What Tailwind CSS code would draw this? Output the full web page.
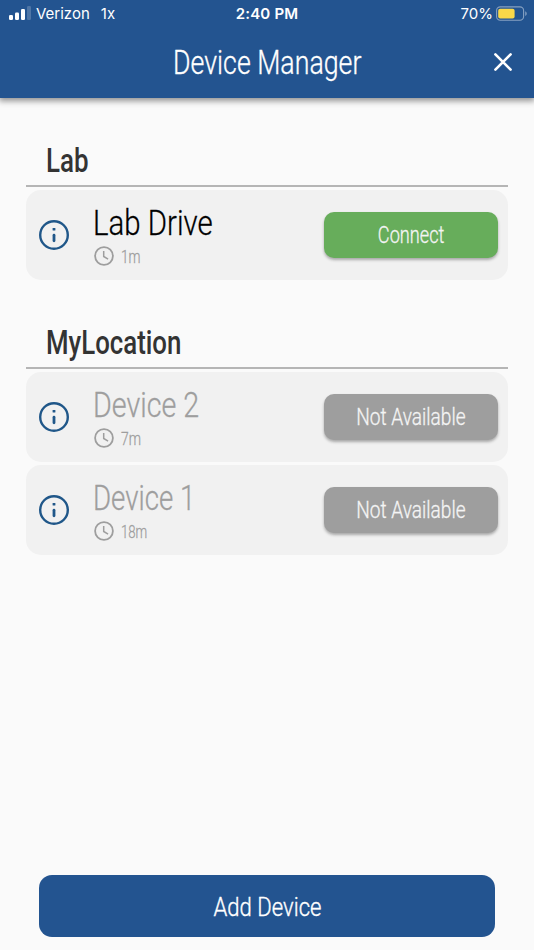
<!DOCTYPE html>
<html lang="en">
<head>
<meta charset="utf-8">
<title>Device Manager</title>
<script src="https://cdn.jsdelivr.net/npm/@tailwindcss/browser@4"></script>
</head>
<body class="bg-[#fafafa]">
<svg class="hidden">
  <symbol id="info" viewBox="0 0 30 30"><circle cx="15" cy="15" r="13.8" fill="none" stroke="#205789" stroke-width="2.4"/><rect x="13.6" y="7.9" width="2.8" height="2.6" rx=".6" fill="#205789"/><path d="M15 15.2v5.6" stroke="#205789" stroke-width="2.8" stroke-linecap="round"/></symbol>
  <symbol id="clock" viewBox="0 0 20 20"><circle cx="10" cy="10" r="8.9" fill="none" stroke="#9e9e9e" stroke-width="1.8"/><path d="M9.7 5v5.5l4.4 2.6" fill="none" stroke="#9e9e9e" stroke-width="1.5"/></symbol>
</svg>
<div class="flex h-[950px] w-[534px] flex-col overflow-hidden bg-[#fafafa] font-['Roboto',sans-serif] whitespace-nowrap">
  <header class="h-[98px] shrink-0 bg-[#235490] text-white shadow-[0_2px_6px_1px_rgba(0,0,0,0.42)]">
    <div class="grid h-7 grid-cols-3 items-center pr-[7px] pl-[9px] font-['Inter',sans-serif] text-[15px]">
      <div class="flex items-center">
        <svg class="-mt-px h-[15px] w-[22px]" viewBox="0 0 22 15" fill="#fff"><rect y="9" width="4" height="5" rx="1.2"/><rect x="6" y="6.5" width="4" height="7.5" rx="1.2"/><rect x="12" y="3" width="4" height="11" rx="1.2"/><rect x="18" y="0" width="4" height="14" rx="1.2" opacity=".2"/></svg>
        <span class="ml-[5px]">Verizon</span><span class="ml-[11px]">1x</span>
      </div>
      <div class="pr-[2px] text-center text-[15px] font-semibold tracking-[0.2px]">2:40 PM</div>
      <div class="flex items-center justify-end">
        <span>70%</span>
        <svg class="-mt-px ml-[3px] h-[15px] w-[31px]" viewBox="0 0 31 15"><rect x=".6" y=".9" width="27" height="13.4" rx="3.7" fill="none" stroke="#fff" stroke-opacity=".45" stroke-width="1.1"/><rect x="2.2" y="2.7" width="16.4" height="9.8" rx="2" fill="#f9d849"/><path d="M29.3 5.2c1.8.8 1.8 4 0 4.8z" fill="#fff" opacity=".5"/></svg>
      </div>
    </div>
    <div class="grid h-[70px] grid-cols-[60px_1fr_60px] items-center">
      <span></span>
      <h1 class="text-center text-[33px] leading-[70px] font-light [-webkit-text-stroke:0.35px]"><span class="inline-block scale-x-[.81]">Device Manager</span></h1>
      <svg class="-mt-[3px] ml-[20px] size-[18px]" viewBox="0 0 18 18"><path d="M1.4 1.4l15.2 15.2M16.6 1.4L1.4 16.6" stroke="#fff" stroke-width="2.6" stroke-linecap="round"/></svg>
    </div>
  </header>

  <main class="flex-1 px-[26px] pt-[38px]">
    <section>
      <h2 class="h-[51px] border-b-2 border-[#9e9e9e]/75 pl-[20px] text-[33px] leading-[50px] font-medium text-[#333]"><span class="inline-block origin-left scale-x-[.785]">Lab</span></h2>
      <div class="mt-[3px] flex h-[90px] items-center rounded-[15px] bg-[#f1f1f1] pr-[10px] pl-[13px]">
        <svg class="size-[30px]"><use href="#info"/></svg>
        <div class="w-[231px] pb-[2px] pl-[24px] [-webkit-text-stroke:0.3px]">
          <div class="h-[45px] text-[35px] leading-[45px] font-light text-black"><span class="inline-block origin-left scale-x-[.84]">Lab Drive</span></div>
          <div class="flex h-[21px] items-center gap-[7px] pl-[1px] text-[18px] font-light text-[#9e9e9e]"><svg class="-mt-px size-5"><use href="#clock"/></svg><span class="inline-block origin-left scale-x-[.75]">1m</span></div>
        </div>
        <button class="ml-auto h-[46px] w-[174px] rounded-[10px] bg-[#67ad5b] pt-px text-[23px] leading-[46px] font-light text-[#f4f4f4] shadow-[0_2px_3px_rgba(0,0,0,0.3)] [-webkit-text-stroke:0.3px]"><span class="inline-block scale-x-[.79]">Connect</span></button>
      </div>
    </section>
    <section class="mt-[38px]">
      <h2 class="h-[51px] border-b-2 border-[#9e9e9e]/75 pl-[20px] text-[33px] leading-[50px] font-medium text-[#333]"><span class="inline-block origin-left scale-x-[.782]">MyLocation</span></h2>
      <div class="mt-[3px] flex h-[90px] items-center rounded-[15px] bg-[#f1f1f1] pr-[10px] pl-[13px]">
        <svg class="size-[30px]"><use href="#info"/></svg>
        <div class="w-[231px] pb-[2px] pl-[24px] [-webkit-text-stroke:0.3px]">
          <div class="h-[45px] text-[35px] leading-[45px] font-light text-[#9e9e9e]"><span class="inline-block origin-left scale-x-[.82]">Device 2</span></div>
          <div class="flex h-[21px] items-center gap-[7px] pl-[1px] text-[18px] font-light text-[#9e9e9e]"><svg class="-mt-px size-5"><use href="#clock"/></svg><span class="inline-block origin-left scale-x-[.77]">7m</span></div>
        </div>
        <button class="ml-auto h-[46px] w-[174px] rounded-[10px] bg-[#9e9e9e] pt-px text-[23px] leading-[46px] font-light text-[#f4f4f4] shadow-[0_2px_3px_rgba(0,0,0,0.3)] [-webkit-text-stroke:0.3px]"><span class="inline-block scale-x-[.83]">Not Available</span></button>
      </div>
      <div class="mt-[3px] flex h-[90px] items-center rounded-[15px] bg-[#f1f1f1] pr-[10px] pl-[13px]">
        <svg class="size-[30px]"><use href="#info"/></svg>
        <div class="w-[231px] pb-[2px] pl-[24px] [-webkit-text-stroke:0.3px]">
          <div class="h-[45px] text-[35px] leading-[45px] font-light text-[#9e9e9e]"><span class="inline-block origin-left scale-x-[.79]">Device 1</span></div>
          <div class="flex h-[21px] items-center gap-[7px] pl-[1px] text-[18px] font-light text-[#9e9e9e]"><svg class="-mt-px size-5"><use href="#clock"/></svg><span class="inline-block origin-left scale-x-[.73]">18m</span></div>
        </div>
        <button class="ml-auto h-[46px] w-[174px] rounded-[10px] bg-[#9e9e9e] pt-px text-[23px] leading-[46px] font-light text-[#f4f4f4] shadow-[0_2px_3px_rgba(0,0,0,0.3)] [-webkit-text-stroke:0.3px]"><span class="inline-block scale-x-[.83]">Not Available</span></button>
      </div>
    </section>
  </main>
  <footer class="px-[39px] pb-[13px]">
    <button class="block h-[62px] w-full rounded-[13px] bg-[#235490] pt-px text-[26px] leading-[62px] font-light text-white [-webkit-text-stroke:0.35px]"><span class="inline-block scale-x-[.85]">Add Device</span></button>
  </footer>
</div>
</body>
</html>
